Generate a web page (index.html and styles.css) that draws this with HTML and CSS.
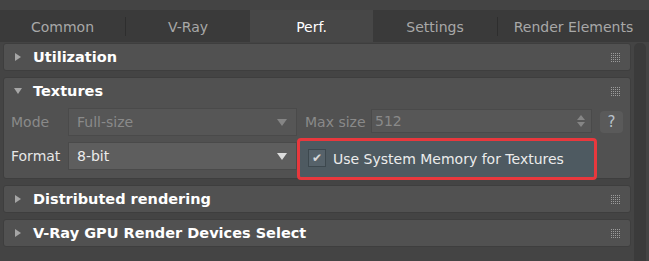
FILE: index.html
```html
<!DOCTYPE html>
<html lang="en">
<head>
    <meta charset="UTF-8">
    <title>Render Setup - Perf.</title>
    <link rel="stylesheet" href="styles.css">
</head>
<body>
    <div class="tabs">
        <div class="tab tab-common">Common</div>
        <div class="tab-sep"></div>
        <div class="tab tab-vray">V-Ray</div>
        <div class="tab tab-perf active">Perf.</div>
        <div class="tab tab-settings">Settings</div>
        <div class="tab-sep"></div>
        <div class="tab tab-elements">Render Elements</div>
    </div>

    <div class="main">
        <div class="panel">
            <div class="rollout">
                <div class="rollout-head">
                    <span class="arrow closed"></span>
                    <span class="title">Utilization</span>
                    <span class="grip"></span>
                </div>
            </div>

            <div class="rollout">
                <div class="rollout-head">
                    <span class="arrow opened"></span>
                    <span class="title">Textures</span>
                    <span class="grip"></span>
                </div>
                <div class="rollout-body">
                    <div class="row">
                        <span class="label disabled">Mode</span>
                        <div class="combo disabled">
                            <span>Full-size</span>
                            <span class="combo-arrow"></span>
                        </div>
                        <span class="label label-max disabled">Max size</span>
                        <div class="spinner">
                            <span>512</span>
                            <span class="spin-arrows">
                                <span class="spin-up"></span>
                                <span class="spin-down"></span>
                            </span>
                        </div>
                        <div class="help-btn">?</div>
                    </div>
                    <div class="row">
                        <span class="label">Format</span>
                        <div class="combo">
                            <span>8-bit</span>
                            <span class="combo-arrow"></span>
                        </div>
                        <label class="check-field">
                            <span class="checkbox">&#10004;</span>
                            <span>Use System Memory for Textures</span>
                        </label>
                    </div>
                </div>
            </div>

            <div class="rollout">
                <div class="rollout-head">
                    <span class="arrow closed"></span>
                    <span class="title">Distributed rendering</span>
                    <span class="grip"></span>
                </div>
            </div>

            <div class="rollout">
                <div class="rollout-head">
                    <span class="arrow closed"></span>
                    <span class="title">V-Ray GPU Render Devices Select</span>
                    <span class="grip"></span>
                </div>
            </div>
        </div>
        <div class="scrollbar"></div>
    </div>
</body>
</html>
```

FILE: styles.css
```css
body {
    margin: 0;
    height: 261px;
    overflow: hidden;
    background: #444444;
    font-family: 'DejaVu Sans', 'Liberation Sans', sans-serif;
    font-size: 14px;
    color: #e2e2e2;
}

/* tab strip */
.tabs {
    display: flex;
    margin-top: 10px;
    height: 32px;
    background: #3a3a3a;
}

.tab {
    display: flex;
    justify-content: center;
    align-items: center;
    padding-top: 2px;
    box-sizing: border-box;
    color: #a8a8a8;
    font-size: 14px;
}

.tab-common { width: 125px; }
.tab-vray { width: 124px; }
.tab-perf { width: 123px; }
.tab-settings { width: 124px; }
.tab-elements { flex: 1; }

.tab.active {
    background: #474747;
    color: #ffffff;
}

.tab-sep {
    width: 1px;
    height: 19px;
    align-self: center;
    background: #2e2e2e;
}

/* rollouts */
.main {
    display: flex;
    padding-top: 1px;
}

.panel {
    display: flex;
    flex-direction: column;
    gap: 6px;
    margin-left: 3px;
    width: 628px;
}

.rollout {
    background: #515151;
    border: 1px solid #3e3e3e;
    border-radius: 3px;
}

.rollout-head {
    display: flex;
    align-items: center;
    height: 26px;
    padding: 0 10px 0 11px;
}

.arrow {
    width: 0;
    height: 0;
}

.arrow.closed {
    border-top: 4px solid transparent;
    border-bottom: 4px solid transparent;
    border-left: 6px solid #a6a6a6;
    margin-right: 12px;
}

.arrow.opened {
    border-left: 4px solid transparent;
    border-right: 4px solid transparent;
    border-top: 6px solid #a6a6a6;
    margin-left: -1px;
    margin-right: 11px;
}

.title {
    flex: 1;
    font-weight: bold;
    font-size: 14.5px;
    color: #ffffff;
}

.grip {
    width: 9px;
    height: 9px;
    background:
        linear-gradient(90deg, transparent 1px, #515151 1px) 0 0 / 2px 2px,
        linear-gradient(transparent 1px, #515151 1px) 0 0 / 2px 2px,
        #9c9c9c;
}

.rollout-body {
    display: flex;
    flex-direction: column;
    gap: 6px;
    padding: 4px 0 8px 7px;
}

.row {
    display: flex;
    align-items: center;
    height: 28px;
}

.label {
    width: 57px;
    color: #e6e6e6;
}

.label.disabled {
    color: #8a8a8a;
}

.label-max {
    width: 66px;
    margin-left: 8px;
}

.combo {
    display: flex;
    align-items: center;
    justify-content: space-between;
    box-sizing: border-box;
    width: 229px;
    height: 28px;
    padding: 0 9px 0 8px;
    background: #5e5e5e;
    border: 1px solid #4a4a4a;
    color: #ececec;
}

.combo.disabled {
    background: #565656;
    color: #8a8a8a;
}

.combo-arrow {
    border-left: 5px solid transparent;
    border-right: 5px solid transparent;
    border-top: 7px solid #dcdcdc;
}

.combo.disabled .combo-arrow {
    border-top-color: #858585;
}

.spinner {
    display: flex;
    align-items: center;
    justify-content: space-between;
    box-sizing: border-box;
    width: 221px;
    height: 24px;
    margin-top: -2px;
    padding: 0 6px 0 3px;
    background: #575757;
    border: 1px solid #4a4a4a;
    color: #8a8a8a;
}

.spin-arrows {
    display: flex;
    flex-direction: column;
    gap: 2px;
}

.spin-up {
    border-left: 4px solid transparent;
    border-right: 4px solid transparent;
    border-bottom: 5px solid #858585;
}

.spin-down {
    border-left: 4px solid transparent;
    border-right: 4px solid transparent;
    border-top: 5px solid #858585;
}

.help-btn {
    display: flex;
    align-items: center;
    justify-content: center;
    width: 23px;
    height: 22px;
    margin-left: 8px;
    background: #5a5a5a;
    border-radius: 4px;
    color: #b9c2ca;
    font-size: 15px;
}

/* highlighted checkbox */
.check-field {
    display: flex;
    align-items: center;
    align-self: flex-start;
    box-sizing: border-box;
    width: 300px;
    height: 42px;
    margin-top: -4px;
    padding-left: 8px;
    gap: 7px;
    background: #4e5a61;
    border: 3px solid #e8383d;
    border-radius: 4px;
    color: #ececec;
}

.checkbox {
    display: flex;
    align-items: center;
    justify-content: center;
    box-sizing: border-box;
    width: 18px;
    height: 18px;
    margin-top: -3px;
    background: #56626a;
    border: 1px solid #3d484e;
    color: #d8d8d8;
    font-size: 12px;
}

.scrollbar {
    width: 12px;
    height: 230px;
    margin-left: 3px;
    background: #3b3b3b;
    border-radius: 5px 5px 0 0;
}
```
